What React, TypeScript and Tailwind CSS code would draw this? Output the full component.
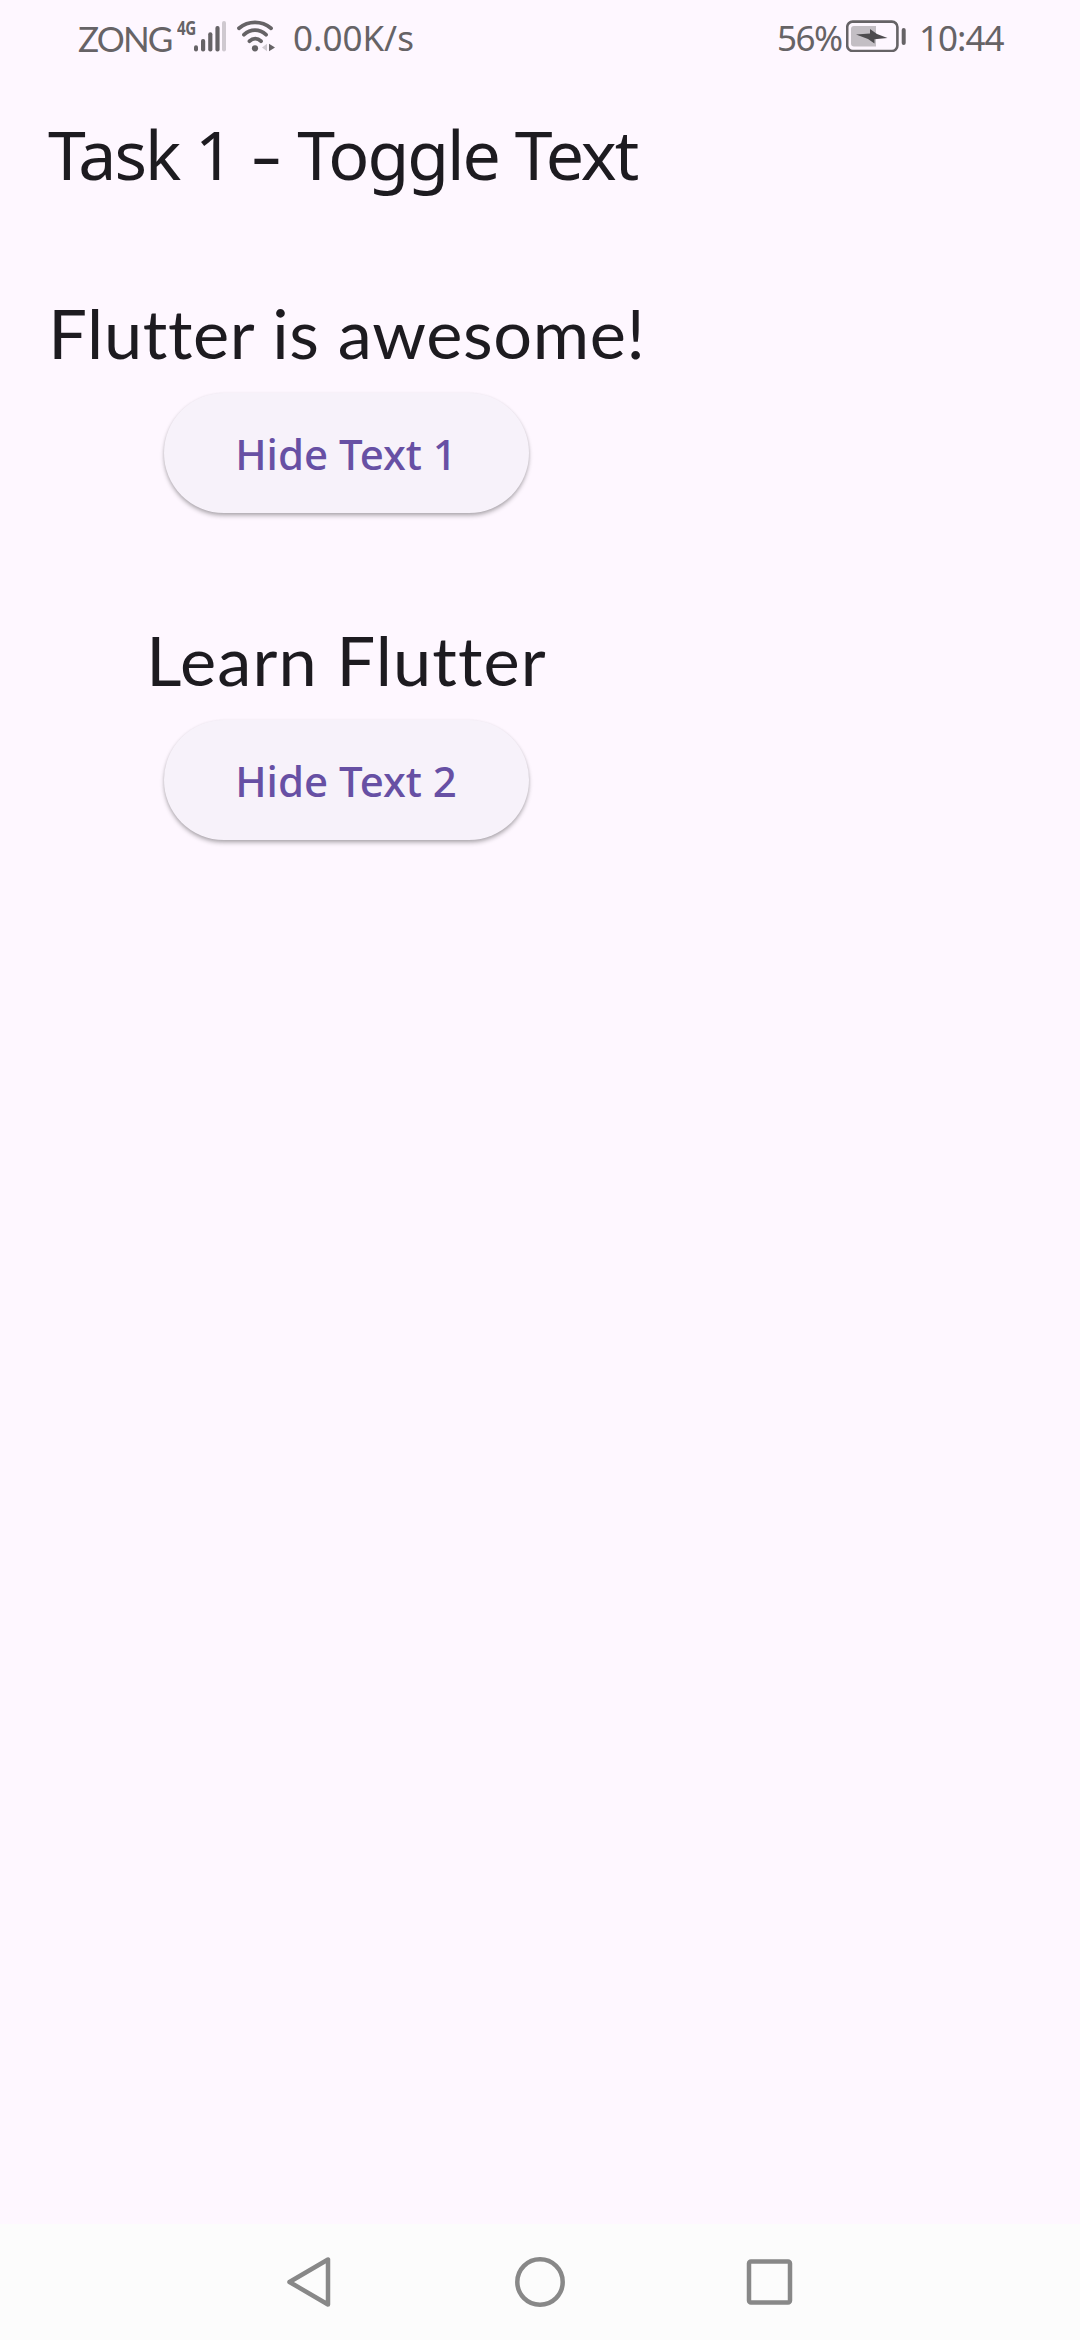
import { useState } from "react";

function SignalIcon() {
  return (
    <svg className="block h-8 w-8 shrink-0" viewBox="0 0 32 32" fill="#666366">
      <rect x="0" y="25.2" width="4" height="6.3" rx="2" />
      <rect x="7" y="19" width="4.2" height="12.5" rx="2" />
      <rect x="14.2" y="12.3" width="4.2" height="19.2" rx="2" />
      <rect x="21.4" y="6" width="4.2" height="25.5" rx="2" />
      <rect x="28" y="1" width="4" height="30.5" rx="2" fill="#cfc9d0" />
    </svg>
  );
}

function WifiIcon() {
  return (
    <svg className="block h-8 w-[38px] shrink-0" viewBox="0 0 38 32" fill="none" stroke="#666366" strokeWidth="3.8" strokeLinecap="round">
      <path d="M2 8.2C11.5 0.3 24.5 0.3 34 8.2" />
      <path d="M7 14.7C13.5 8.7 22.5 8.7 29 14.7" />
      <path d="M12.5 21.2C16 17.7 20.5 17.7 24 21.2" />
      <circle cx="18" cy="28.3" r="3.1" fill="#666366" stroke="none" />
      <path d="M30 23.7V31.3L25 27.5Z" fill="#cfc9d0" stroke="none" />
      <path d="M32 23.7V31.3L38 27.5Z" fill="#666366" stroke="none" />
    </svg>
  );
}

function BatteryIcon() {
  return (
    <svg className="block h-8 w-[60px] shrink-0" viewBox="0 0 60 32">
      <rect x="1.2" y="1.6" width="50.2" height="29.4" rx="5.5" fill="none" stroke="#666366" strokeWidth="2.6" />
      <path d="M8 6H30V26.5H8Q5 26.5 5 23.5V9Q5 6 8 6Z" fill="#c3bec4" />
      <path d="M24 9L31 14L41.5 18L28.5 19.2V23.5L22 19L10 14.5L24 13.6Z" fill="#4d4b4e" />
      <rect x="55.7" y="8" width="4" height="17" rx="2" fill="#666366" />
    </svg>
  );
}

function StatusBar() {
  return (
    <header className="flex h-[75px] items-start pl-[78px] pr-[77px] pt-5 text-[35px] leading-[36px] whitespace-nowrap text-[#666366]">
      <span className="w-[99px] font-['Lato',sans-serif] tracking-[-1.8px]">ZONG</span>
      <span className="w-[17px] origin-left scale-x-80 text-[19px] leading-4 font-bold tracking-[-0.5px]">4G</span>
      <SignalIcon />
      <div className="ml-[11px]"><WifiIcon /></div>
      <span className="ml-[18px]">0.00K/s</span>
      <span className="ml-auto w-[69px] tracking-[-1.5px]">56%</span>
      <BatteryIcon />
      <span className="ml-[13px] w-[84px] tracking-[-1px]">10:44</span>
    </header>
  );
}

function ToggleText({ text, index, spacing }: { text: string; index: number; spacing: string }) {
  const [visible, setVisible] = useState(true);
  return (
    <section className="flex h-[227px] flex-col items-center">
      <p className={`h-[107px] font-['Lato',sans-serif] text-[68.5px] leading-[94px] whitespace-nowrap ${spacing}`}>{visible && text}</p>
      <button
        onClick={() => setVisible(!visible)}
        className="h-[120px] w-[365px] shrink-0 rounded-full bg-[#f7f2fa] text-[42px] leading-[121px] font-medium whitespace-nowrap text-[#6750a4] shadow-[0_3px_4px_rgba(0,0,0,0.25),0_1px_3px_rgba(0,0,0,0.1)]"
      >
        {visible ? "Hide" : "Show"} Text {index}
      </button>
    </section>
  );
}

function NavigationBar() {
  return (
    <nav className="flex h-[116px] items-center justify-center gap-[180px] bg-[#fcfcfc]">
      <svg className="size-[50px]" viewBox="0 0 50 50" fill="none" stroke="#888" strokeWidth="4.5" strokeLinejoin="round">
        <path d="M43 2.5V47.5L4.5 25Z" />
      </svg>
      <svg className="size-[50px]" viewBox="0 0 50 50" fill="none" stroke="#888" strokeWidth="4.5">
        <circle cx="25" cy="25" r="22.7" />
      </svg>
      <svg className="size-[50px]" viewBox="0 0 50 50" fill="none" stroke="#888" strokeWidth="4.5">
        <rect x="4" y="4.6" width="41" height="41" rx="2" />
      </svg>
    </nav>
  );
}

export default function App() {
  return (
    <div className="flex h-[2340px] w-[1080px] flex-col overflow-hidden bg-[#fef7ff] font-['Noto_Sans',sans-serif] text-[#1d1b20]">
      <StatusBar />
      <h1 className="h-[211px] pl-12 text-[68px] leading-[157px] tracking-[-2px] whitespace-nowrap">
        Task 1 <span className="mx-[7px] inline-block scale-x-145">-</span> Toggle Text
      </h1>
      <main className="flex w-[692px] flex-1 flex-col gap-[100px]">
        <ToggleText text="Flutter is awesome!" index={1} spacing="pl-0.5 tracking-[0.65px]" />
        <ToggleText text="Learn Flutter" index={2} spacing="pl-px tracking-[1.1px]" />
      </main>
      <NavigationBar />
    </div>
  );
}
